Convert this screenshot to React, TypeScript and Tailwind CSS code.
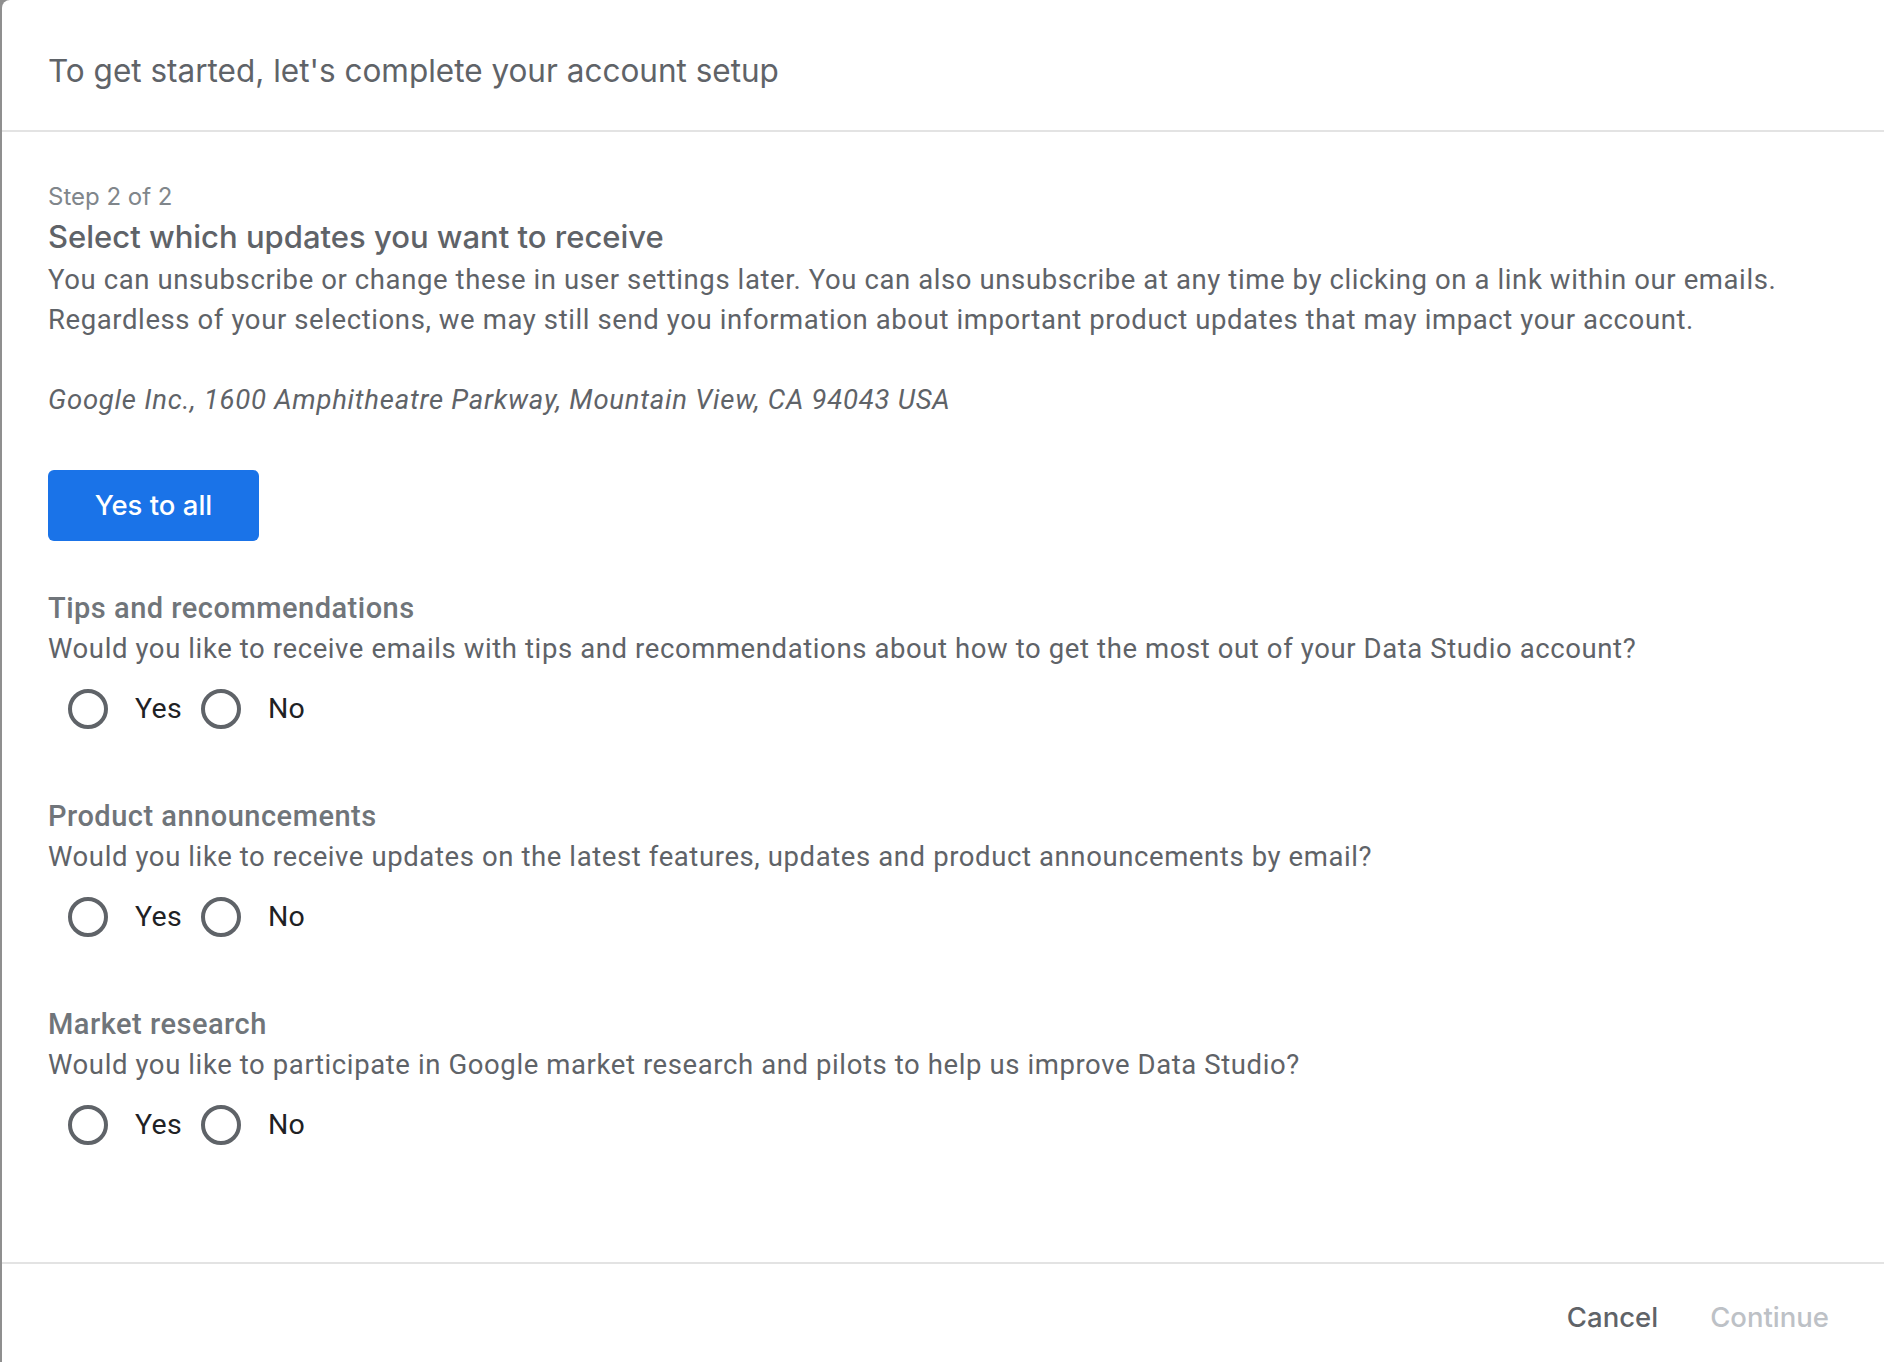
import { useState } from "react"

type Choice = "yes" | "no" | null

const sections = [
  {
    key: "tips",
    title: "Tips and recommendations",
    question:
      "Would you like to receive emails with tips and recommendations about how to get the most out of your Data Studio account?",
  },
  {
    key: "product",
    title: "Product announcements",
    question:
      "Would you like to receive updates on the latest features, updates and product announcements by email?",
  },
  {
    key: "research",
    title: "Market research",
    question:
      "Would you like to participate in Google market research and pilots to help us improve Data Studio?",
  },
]

const headingFont = { fontFamily: "Inter, 'Noto Sans', sans-serif" }
const bodyFont = { fontFamily: "Roboto, 'Liberation Sans', sans-serif" }

function Radio({
  label,
  checked,
  onSelect,
}: {
  label: string
  checked: boolean
  onSelect: () => void
}) {
  return (
    <button type="button" onClick={onSelect} className="flex items-center">
      <span
        className={`flex h-[40px] w-[40px] items-center justify-center rounded-full border-[4px] ${
          checked ? "border-[#1a73e8]" : "border-[#5f6368]"
        }`}
      >
        {checked ? (
          <span className="h-[20px] w-[20px] rounded-full bg-[#1a73e8]" />
        ) : null}
      </span>
      <span className="ml-[27px] text-[28.5px] leading-[40px] tracking-[0.3px] text-[#202124]">
        {label}
      </span>
    </button>
  )
}

export default function App() {
  const [answers, setAnswers] = useState<Record<string, Choice>>({})

  const setAll = () => {
    const next: Record<string, Choice> = {}
    sections.forEach((s) => (next[s.key] = "yes"))
    setAnswers(next)
  }

  const ready = sections.every((s) => answers[s.key])

  return (
    <div className="flex min-h-screen bg-[#8f8f8f]" style={bodyFont}>
      <div className="ml-[2px] flex h-[1362px] flex-1 flex-col overflow-hidden rounded-tl-[8px] bg-white">
        <div className="flex h-[132px] shrink-0 items-center border-b-2 border-[#e3e3e3] pl-[46px] pt-[12px]">
          <h1
            className="text-[31.5px] font-normal text-[#5f6368]"
            style={headingFont}
          >
            To get started, let's complete your account setup
          </h1>
        </div>

        <div className="flex-1 px-[46px] pt-[50px]">
          <p
            className="text-[24px] leading-[30px] text-[#80868b]"
            style={headingFont}
          >
            Step 2 of 2
          </p>
          <h2
            className="mt-[6px] text-[31px] font-medium leading-[38px] text-[#5f6368]"
            style={headingFont}
          >
            Select which updates you want to receive
          </h2>
          <p className="mt-[4px] max-w-[1770px] text-[27.5px] leading-[40px] tracking-[0.6px] text-[#5f6368]">
            You can unsubscribe or change these in user settings later. You can
            also unsubscribe at any time by clicking on a link within our
            emails. Regardless of your selections, we may still send you
            information about important product updates that may impact your
            account.
          </p>
          <p className="mt-[40px] text-[27.5px] italic leading-[40px] tracking-[0.75px] text-[#5f6368]">
            Google Inc., 1600 Amphitheatre Parkway, Mountain View, CA 94043 USA
          </p>

          <button
            type="button"
            onClick={setAll}
            className="mt-[50px] h-[71px] w-[211px] rounded-[6px] bg-[#1a73e8] text-[27.5px] font-medium text-white"
            style={headingFont}
          >
            Yes to all
          </button>

          <div className="mt-[49px] flex flex-col gap-[65px]">
            {sections.map((s) => (
              <div key={s.key}>
                <h3 className="text-[29px] font-medium leading-[36px] tracking-[0.5px] text-[#70757a]">
                  {s.title}
                </h3>
                <p className="mt-[3px] text-[27.5px] leading-[40px] tracking-[0.6px] text-[#5f6368]">
                  {s.question}
                </p>
                <div className="ml-[20px] mt-[16px] flex h-[48px] items-center gap-[19px]">
                  <Radio
                    label="Yes"
                    checked={answers[s.key] === "yes"}
                    onSelect={() => setAnswers({ ...answers, [s.key]: "yes" })}
                  />
                  <Radio
                    label="No"
                    checked={answers[s.key] === "no"}
                    onSelect={() => setAnswers({ ...answers, [s.key]: "no" })}
                  />
                </div>
              </div>
            ))}
          </div>
        </div>

        <div
          className="flex h-[100px] shrink-0 items-center justify-end gap-[52px] border-t-2 border-[#e3e3e3] pr-[55px] pt-[10px] text-[27.5px] font-medium"
          style={headingFont}
        >
          <button type="button" className="text-[#5f6368]">
            Cancel
          </button>
          <button
            type="button"
            disabled={!ready}
            className={ready ? "text-[#1a73e8]" : "text-[#bdc1c6]"}
          >
            Continue
          </button>
        </div>
      </div>
    </div>
  )
}
